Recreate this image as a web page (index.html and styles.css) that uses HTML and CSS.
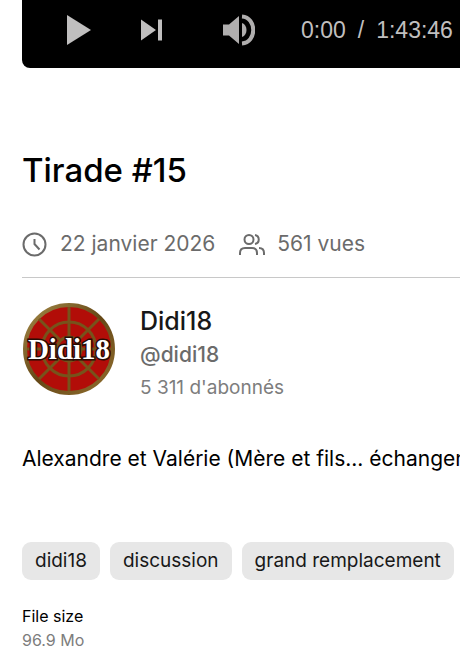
FILE: index.html
```html
<!DOCTYPE html>
<html lang="fr">
<head>
    <meta charset="UTF-8">
    <meta name="viewport" content="width=device-width, initial-scale=1.0">
    <title>Tirade #15</title>
    <link rel="stylesheet" href="styles.css">
</head>
<body>
    <main class="page">
        <div class="player">
            <button type="button" class="control play" aria-label="Lecture">
                <svg width="26" height="30" viewBox="0 0 26 30"><path d="M1 0L25 15L1 30z"/></svg>
            </button>
            <button type="button" class="control next" aria-label="Suivant">
                <svg width="22" height="22" viewBox="0 0 22 22"><path d="M0 0.5L15 11L0 21.5zM17 0.5h4v21h-4z"/></svg>
            </button>
            <button type="button" class="control volume" aria-label="Volume">
                <svg width="32" height="32" viewBox="0 0 32 32">
                    <path d="M0 10.500h6L16 2v28L6 21.500H0z"/>
                    <path d="M19 9c6 2 6 12 0 14z"/>
                    <path class="wave" d="M19 2.500c15 1 15 26 0 27"/>
                </svg>
            </button>
            <div class="time"><span>0:00</span><span>/</span><span>1:43:46</span></div>
        </div>

        <h1>Tirade #15</h1>

        <div class="meta">
            <span class="meta-item">
                <svg class="icon" width="26" height="26" viewBox="0 0 26 26"><circle cx="12.500" cy="13.500" r="11"/><path d="M12.500 8v5l5 5.500"/></svg>
                22 janvier 2026
            </span>
            <span class="meta-item">
                <svg class="icon" width="26" height="26" viewBox="0 0 26 26">
                    <circle cx="10" cy="8.500" r="4.500"/>
                    <path d="M1 24v-2c0-3 2-5 5-5h7c3 0 5 2 5 5v2M16 4c5 1 5 8 0 9M20 17c3 0 5 2 5 5v2"/>
                </svg>
                561 vues
            </span>
        </div>

        <section class="channel">
            <a href="#" class="avatar" aria-label="Didi18">
                <svg viewBox="0 0 94 94">
                    <defs>
                        <linearGradient id="gold" x1="0" y1="0" x2="1" y2="1">
                            <stop offset="0" stop-color="#a58a48"/>
                            <stop offset="0.5" stop-color="#654716"/>
                            <stop offset="1" stop-color="#927030"/>
                        </linearGradient>
                    </defs>
                    <circle cx="47" cy="47" r="44" fill="#b20d08" stroke="url(#gold)" stroke-width="4"/>
                    <g fill="none" stroke="#76531b" stroke-width="3">
                        <path d="M47 5v84M5 47h84M17 17l60 60M77 17L17 77"/>
                        <circle cx="47" cy="47" r="27"/>
                    </g>
                    <circle cx="47" cy="47" r="12" fill="#a80b07" stroke="#76531b" stroke-width="3"/>
                    <text class="avatar-text" x="47" y="57" text-anchor="middle">Didi18</text>
                </svg>
            </a>
            <div class="channel-info">
                <a href="#" class="channel-name">Didi18</a>
                <a href="#" class="channel-handle">@didi18</a>
                <span class="subscribers">5 311 d'abonnés</span>
            </div>
        </section>

        <p class="description">Alexandre et Valérie (Mère et fils... échangen</p>

        <div class="tags">
            <a href="#" class="tag">didi18</a>
            <a href="#" class="tag">discussion</a>
            <a href="#" class="tag">grand remplacement</a>
        </div>

        <dl class="file-info">
            <dt>File size</dt>
            <dd>96.9 Mo</dd>
        </dl>
    </main>
</body>
</html>
```

FILE: styles.css
```css
* {
    margin: 0;
    padding: 0;
    box-sizing: border-box;
}

body {
    font-family: Inter, "Liberation Sans", sans-serif;
    background: #fff;
    color: #000;
    overflow-x: hidden;
}

a {
    color: inherit;
    text-decoration: none;
}

.page {
    padding-left: 22px;
}

/* Player bar */
.player {
    display: flex;
    align-items: center;
    height: 68px;
    padding: 0 8px 8px 44px;
    background: #000;
    border-bottom-left-radius: 8px;
    color: #c0bfbf;
}

.control {
    display: flex;
    border: none;
    background: none;
    color: inherit;
    cursor: pointer;
}

.control svg {
    fill: currentColor;
}

.next {
    margin-left: 49px;
}

.volume {
    margin-left: 60px;
    color: #b0aeae;
}

.control .wave {
    fill: none;
    stroke: currentColor;
    stroke-width: 4;
}

.time {
    display: flex;
    gap: 12px;
    margin-left: 46px;
    font-family: "Liberation Sans", Arial, sans-serif;
    font-size: 23px;
    white-space: nowrap;
}

h1 {
    margin-top: 80px;
    font-size: 33px;
    font-weight: 500;
    line-height: 44px;
}

/* Date and views */
.meta {
    display: flex;
    gap: 24px;
    margin-top: 36px;
    padding-bottom: 17px;
    border-bottom: 1px solid #c8c8c8;
    color: #6b6b6b;
    font-size: 21px;
    line-height: 32px;
    white-space: nowrap;
}

.meta-item {
    display: flex;
    align-items: center;
    gap: 12px;
}

.icon {
    fill: none;
    stroke: currentColor;
    stroke-width: 2;
}

/* Channel */
.channel {
    display: flex;
    gap: 24px;
    margin-top: 24px;
}

.avatar {
    width: 94px;
    height: 94px;
}

.avatar svg {
    display: block;
}

.avatar-text {
    fill: #fff;
    stroke: #280c04;
    stroke-width: 3px;
    paint-order: stroke;
    font-family: "Liberation Serif", serif;
    font-size: 29px;
    font-weight: 700;
}

.channel-info {
    display: flex;
    flex-direction: column;
    padding-top: 3px;
    color: #6b6b6b;
    font-size: 19px;
    line-height: 33px;
}

.channel-name {
    color: #181818;
    font-size: 25px;
    font-weight: 500;
}

.channel-handle {
    font-size: 21px;
    font-weight: 500;
}

.subscribers {
    color: #7d7d7d;
}

.description {
    margin-top: 38px;
    overflow: hidden;
    font-size: 21px;
    line-height: 34px;
    white-space: nowrap;
}

/* Tags */
.tags {
    display: flex;
    gap: 10px;
    margin-top: 66px;
}

.tag {
    padding: 0 13px;
    border-radius: 9px;
    background: #e7e7e7;
    color: #181818;
    font-size: 19px;
    line-height: 38px;
    white-space: nowrap;
}

.file-info {
    margin-top: 24px;
    font-size: 16px;
    line-height: 24px;
}

.file-info dd {
    color: #7d7d7d;
}
```
